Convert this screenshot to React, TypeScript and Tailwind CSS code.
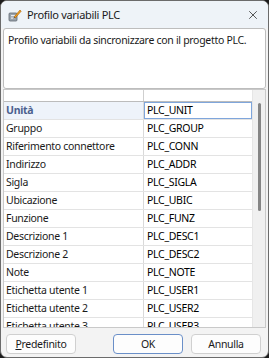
import { X } from 'lucide-react';

const rows: [string, string][] = [
  ['Unità', 'PLC_UNIT'],
  ['Gruppo', 'PLC_GROUP'],
  ['Riferimento connettore', 'PLC_CONN'],
  ['Indirizzo', 'PLC_ADDR'],
  ['Sigla', 'PLC_SIGLA'],
  ['Ubicazione', 'PLC_UBIC'],
  ['Funzione', 'PLC_FUNZ'],
  ['Descrizione 1', 'PLC_DESC1'],
  ['Descrizione 2', 'PLC_DESC2'],
  ['Note', 'PLC_NOTE'],
  ['Etichetta utente 1', 'PLC_USER1'],
  ['Etichetta utente 2', 'PLC_USER2'],
  ['Etichetta utente 3', 'PLC_USER3'],
];

const AppIcon = () => (
  <svg width="14" height="14" viewBox="0 0 14 14">
    <rect x="1" y="5" width="8" height="8" rx="1" fill="#9aa3ad" stroke="#5f6770" strokeWidth="0.8" />
    <rect x="3" y="7" width="4" height="1.2" fill="#e8ecf0" />
    <rect x="3" y="9.5" width="4" height="1.2" fill="#e8ecf0" />
    <path d="M6 9 L12 2 L13.2 3.2 L7.2 10 Z" fill="#f0a020" stroke="#a8600a" strokeWidth="0.6" />
    <path d="M6 9 L5.4 10.8 L7.2 10 Z" fill="#444" />
  </svg>
);

const DataRow = ({ label, value, index }: { label: string; value: string; index: number }) => {
  const active = index === 0;
  return (
    <div className="flex h-[18px] shrink-0 border-b border-[#e3e3e3]">
      <div
        className={`w-[140px] shrink-0 border-r border-[#d9d9d9] pl-[2px] flex items-center ${
          active ? 'bg-[#eef3fa] text-[#4b5f8e] font-bold' : 'bg-white text-[#1a1a1a]'
        }`}
      >
        {label}
      </div>
      <div
        className={`flex-1 flex items-center pl-[3px] bg-white ${
          active ? 'outline outline-1 outline-[#7fa6dc] -outline-offset-1' : ''
        }`}
      >
        {value}
      </div>
    </div>
  );
};

const Button = ({ children, primary = false, className = '' }: { children: React.ReactNode; primary?: boolean; className?: string }) => (
  <div
    className={`h-[20px] w-[70px] rounded-[4px] bg-[#fdfdfd] flex items-center justify-center text-[#1a1a1a] ${
      primary ? 'border border-[#6a8fc8]' : 'border border-[#d0d0d0]'
    } ${className}`}
  >
    {children}
  </div>
);

export default function App() {
  return (
    <div
      className="w-[269px] h-[358px] bg-[#1c1c1c] text-[10.5px] leading-none tracking-[-0.3px]"
      style={{ fontFamily: '"Noto Sans", "Open Sans", sans-serif' }}
    >
      <div className="w-full h-full rounded-[7px] border border-[#6b6b6b] bg-[#f3f3f3] overflow-hidden flex flex-col">
        {/* title bar */}
        <div className="h-[27px] shrink-0 bg-[#eef3f8] flex items-center pl-[7px] pr-[8px]">
          <AppIcon />
          <span className="ml-[5px] text-[11px] text-[#1a1a1a]">Profilo variabili PLC</span>
          <X className="ml-auto text-[#333]" size={14} strokeWidth={1.4} />
        </div>

        {/* description */}
        <div className="mx-[2px] h-[61px] shrink-0 rounded-[3px] border border-[#bdbdbd] bg-white px-[4px] pt-[6px] text-[#1a1a1a] whitespace-nowrap">
          Profilo variabili da sincronizzare con il progetto PLC.
        </div>

        {/* grid */}
        <div className="mx-[2px] h-[239px] shrink-0 flex border border-[#c9c9c9] bg-white overflow-hidden">
          <div className="flex-1 flex flex-col overflow-hidden">
            <div className="flex h-[12px] shrink-0 border-b border-[#bcbcbc]">
              <div className="w-[140px] border-r border-[#cfcfcf] bg-white" />
              <div className="flex-1 bg-white" />
            </div>
            {rows.map(([label, value], i) => (
              <DataRow key={label} label={label} value={value} index={i} />
            ))}
          </div>
          <div className="w-[13px] shrink-0 bg-[#f0f0f0] border-l border-[#e6e6e6] flex justify-center pt-[13px]">
            <div className="w-[3px] h-[108px] rounded-full bg-[#858585]" />
          </div>
        </div>

        {/* buttons */}
        <div className="flex items-center mt-[6px] pl-[5px] pr-[7px]">
          <Button>
            <span>
              <span className="underline">P</span>redefinito
            </span>
          </Button>
          <Button primary className="ml-auto">OK</Button>
          <Button className="ml-[8px]">Annulla</Button>
        </div>
      </div>
    </div>
  );
}
